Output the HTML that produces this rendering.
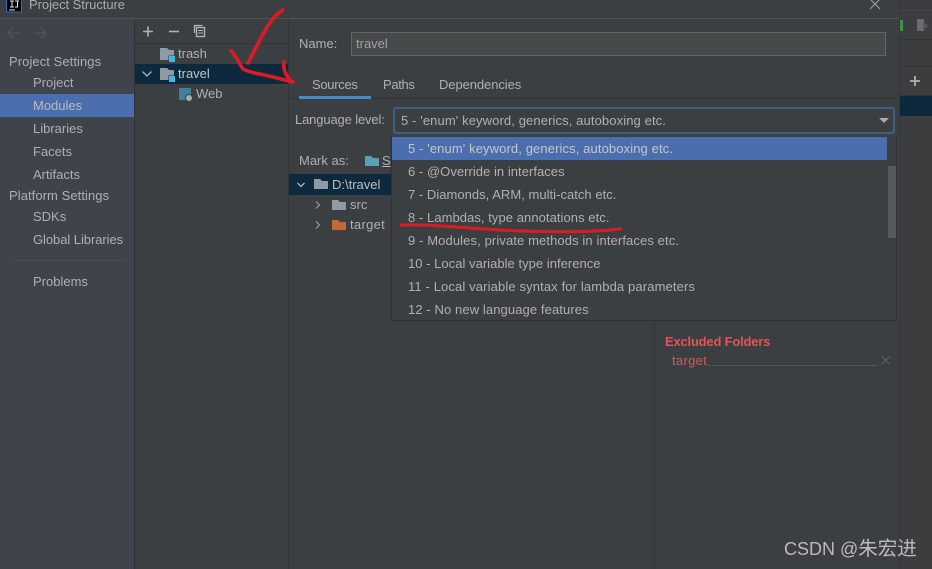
<!DOCTYPE html>
<html><head><meta charset="utf-8"><style>
html,body{margin:0;padding:0;background:#3c3f41}
#r{position:relative;width:932px;height:569px;overflow:hidden;background:#3c3f41;font-family:"Liberation Sans","Noto Sans CJK SC",sans-serif;font-size:13px;color:#aeb0b2}
.a{position:absolute}
.t{position:absolute;white-space:nowrap;line-height:16px}
svg{position:absolute;left:0;top:0}
</style></head><body><div id="r">
<div class="a" style="left:0;top:0;width:134px;height:569px;background:#3e434c"></div>
<div class="a" style="left:0;top:0;width:134px;height:18px;background:#3c3f41"></div>
<div class="a" style="left:0;top:94px;width:134px;height:23px;background:#4b6eaf"></div>
<div class="a" style="left:135px;top:64px;width:153px;height:20px;background:#0d293e"></div>
<div class="a" style="left:289px;top:174px;width:102px;height:21px;background:#0d293e"></div>
<div class="a" style="left:0;top:18px;width:899px;height:1px;background:#515456"></div>
<div class="a" style="left:134px;top:19px;width:1px;height:550px;background:#2f3132"></div>
<div class="a" style="left:288px;top:19px;width:1px;height:550px;background:#323436"></div>
<div class="a" style="left:135px;top:43px;width:153px;height:1px;background:#323436"></div>
<div class="a" style="left:289px;top:98px;width:610px;height:1px;background:#323436"></div>
<div class="a" style="left:654px;top:321px;width:1px;height:248px;background:#323436"></div>
<div class="a" style="left:899px;top:0;width:33px;height:569px;background:#3b3d3f;border-left:1px solid #333537"></div>
<div class="a" style="left:900px;top:96px;width:32px;height:20px;background:#0d293e"></div>
<div class="a" style="left:900px;top:10px;width:32px;height:1px;background:#46494b"></div>
<div class="a" style="left:900px;top:39px;width:32px;height:1px;background:#323436"></div>
<div class="a" style="left:900px;top:66px;width:32px;height:1px;background:#323436"></div>
<div class="a" style="left:900px;top:95px;width:32px;height:1px;background:#323436"></div>
<div class="a" style="left:351px;top:32px;width:533px;height:22px;background:#45494a;border:1px solid #646464"></div>
<div class="a" style="left:299px;top:96px;width:72px;height:3px;background:#4a88c7"></div>
<div class="a" style="left:393px;top:107px;width:498px;height:23px;background:#3c3f41;border:2px solid #3d6185;border-radius:3px"></div>
<div class="a" style="left:391px;top:136px;width:506px;height:185px;background:#3c3f41;border:1px solid #2f3132;border-top:0;box-sizing:border-box"></div>
<div class="a" style="left:392px;top:137px;width:495px;height:23px;background:#4b6eaf"></div>
<div class="a" style="left:888px;top:166px;width:8px;height:72px;background:#565a5c"></div>
<div class="a" style="left:708px;top:365px;width:169px;border-bottom:1px dotted #6a6a6a"></div>

<div class="t" style="left:29px;top:-3px;color:#a9abad;letter-spacing:-.05px">Project Structure</div>
<div class="t" style="left:9px;top:54px;letter-spacing:.07px">Project Settings</div>
<div class="t" style="left:33px;top:75px">Project</div>
<div class="t" style="left:33px;top:98px;color:#b8babc">Modules</div>
<div class="t" style="left:33px;top:121px">Libraries</div>
<div class="t" style="left:33px;top:144px">Facets</div>
<div class="t" style="left:33px;top:167px">Artifacts</div>
<div class="t" style="left:9px;top:188px;letter-spacing:.07px">Platform Settings</div>
<div class="t" style="left:33px;top:209px">SDKs</div>
<div class="t" style="left:33px;top:232px;letter-spacing:-.06px">Global Libraries</div>
<div class="t" style="left:33px;top:274px">Problems</div>

<div class="t" style="left:178px;top:46px">trash</div>
<div class="t" style="left:178px;top:66px;color:#c0c2c4">travel</div>
<div class="t" style="left:196px;top:86px">Web</div>

<div class="t" style="left:299px;top:36px">Name:</div>
<div class="t" style="left:356px;top:36px;color:#a0a2a4">travel</div>
<div class="t" style="left:312px;top:77px;letter-spacing:-.3px">Sources</div>
<div class="t" style="left:383px;top:77px;letter-spacing:-.35px">Paths</div>
<div class="t" style="left:439px;top:77px;letter-spacing:-.08px">Dependencies</div>
<div class="t" style="left:295px;top:112px;letter-spacing:-.14px">Language level:</div>
<div class="t" style="left:401px;top:113px;letter-spacing:.11px">5 - 'enum' keyword, generics, autoboxing etc.</div>
<div class="t" style="left:299px;top:153px">Mark as:</div>
<div class="t" style="left:382px;top:153px;text-decoration:underline">S</div>

<div class="t" style="left:332px;top:177px;color:#bcbec0">D:\travel</div>
<div class="t" style="left:350px;top:197px">src</div>
<div class="t" style="left:350px;top:217px;letter-spacing:.3px">target</div>

<div class="t" style="left:408px;top:141px;color:#c4c6c8;letter-spacing:.11px">5 - 'enum' keyword, generics, autoboxing etc.</div>
<div class="t" style="left:408px;top:164px;letter-spacing:.04px">6 - @Override in interfaces</div>
<div class="t" style="left:408px;top:187px;letter-spacing:.03px">7 - Diamonds, ARM, multi-catch etc.</div>
<div class="t" style="left:408px;top:210px;letter-spacing:.06px">8 - Lambdas, type annotations etc.</div>
<div class="t" style="left:408px;top:233px;letter-spacing:.11px">9 - Modules, private methods in interfaces etc.</div>
<div class="t" style="left:408px;top:256px;letter-spacing:.03px">10 - Local variable type inference</div>
<div class="t" style="left:408px;top:279px;letter-spacing:.13px">11 - Local variable syntax for lambda parameters</div>
<div class="t" style="left:408px;top:302px;letter-spacing:.1px">12 - No new language features</div>

<div class="t" style="left:665px;top:334px;color:#e05555;font-weight:bold;letter-spacing:-.2px">Excluded Folders</div>
<div class="t" style="left:672px;top:353px;color:#d05a5a;letter-spacing:.3px">target</div>
<div class="t" style="left:784px;top:538px;font-size:18px;line-height:22px;color:#b9bbbd">CSDN @<span style="font-size:19.500px">朱宏进</span></div>

<svg width="932" height="569" viewBox="0 0 932 569" fill="none">
<!-- app logo -->
<rect x="6.500" y="-2" width="15" height="14" fill="#000" stroke="#2f6fc0"/>
<path d="M10 1h4M12 1v6M10 7h4M15 1h4M17.500 1v6h-2.500" stroke="#e8e8e8" stroke-width="1"/>
<path d="M9 10h6" stroke="#e8e8e8"/>
<!-- close -->
<path d="M870 -1l10 10M880 -1l-10 10" stroke="#a0a2a4" stroke-width="1"/>
<!-- nav arrows -->
<path d="M20 33H8M13 28l-5 5 5 5" stroke="#4f5257" stroke-width="1.600"/>
<path d="M34 33h12M41 28l5 5-5 5" stroke="#4f5257" stroke-width="1.600"/>
<!-- sidebar separator -->
<path d="M12 260.500H125" stroke="#494d55"/>
<!-- toolbar -->
<path d="M143 31.500h10M148 26.500v10" stroke="#afb1b3" stroke-width="1.600"/>
<path d="M169 31.500h10" stroke="#afb1b3" stroke-width="1.600"/>
<path d="M194.500 33V25.500h8" stroke="#afb1b3" stroke-width="1.300"/>
<rect x="196.500" y="27.500" width="8" height="9" stroke="#afb1b3" stroke-width="1.400"/>
<path d="M198 30.500h5M198 33h5" stroke="#afb1b3"/>
<!-- module folders -->
<path d="M160 48h7l2 2h5v10h-14z" fill="#8e9ba5"/><rect x="168.500" y="55.500" width="7" height="7" fill="#3c3f41"/><rect x="169" y="56" width="6" height="6" fill="#40b6e0"/>
<path d="M160 68h7l2 2h5v10h-14z" fill="#8e9ba5"/><rect x="168.500" y="75.500" width="7" height="7" fill="#0d293e"/><rect x="169" y="76" width="6" height="6" fill="#40b6e0"/>
<path d="M142.500 71.500l4.500 4.500 4.500-4.500" stroke="#afb1b3" stroke-width="1.300"/>
<!-- web icon -->
<path d="M179 88h12v7h-4v5h-8z" fill="#3d8299"/>
<circle cx="189" cy="98" r="3.500" fill="#a9abad" stroke="#3c3f41"/>
<!-- dropdown arrow -->
<path d="M879 118h10l-5 5z" fill="#a9abad"/>
<!-- mark as folder -->
<path d="M365 156h6l2 2h6v8h-14z" fill="#5a9fb8"/>
<!-- source tree -->
<path d="M297.500 183l3.500 3.500 3.500-3.500" stroke="#afb1b3" stroke-width="1.300"/>
<path d="M314 179h6l2 2h6v8h-14z" fill="#8e9ba5"/>
<path d="M316 201.500l3.500 3.500-3.500 3.500" stroke="#9a9c9e" stroke-width="1.200"/>
<path d="M332 200h6l2 2h6v8h-14z" fill="#8e9ba5"/>
<path d="M316 221.500l3.500 3.500-3.500 3.500" stroke="#9a9c9e" stroke-width="1.200"/>
<path d="M332 220h6l2 2h6v8h-14z" fill="#c0683a"/>
<!-- right plus -->
<path d="M910 81h10M915 76v10" stroke="#afb1b3" stroke-width="1.800"/>
<!-- run icons -->
<path d="M900 20h3v11h-3z" fill="#3f8f4a"/>
<path d="M917 19h7v12h-7z" fill="#6a6d6f"/><path d="M923 22l6 4-6 4z" fill="#55585a"/>
<!-- excluded x -->
<path d="M882 356.500l7.500 7.500M889.500 356.500l-7.500 7.500" stroke="#5c5f61" stroke-width="1.200"/>
<!-- red annotations -->
<g stroke="#dc1c24" stroke-linecap="round" stroke-linejoin="round">
<path stroke-width="3.600" d="M283 10C276 14 270 22 266 29C261 37 256 48 248 63"/>
<path stroke-width="3.600" d="M231 51C236 55 238 62 243 69C250 73 262 74 273 77L293 82"/>
<path stroke-width="3.600" d="M284 62C283 68 285 75 292 82"/>
<path stroke-width="3" d="M401 225C430 224 462 228 500 230C540 232 585 233 621 229"/>
</g>
</svg>
</div></body></html>
